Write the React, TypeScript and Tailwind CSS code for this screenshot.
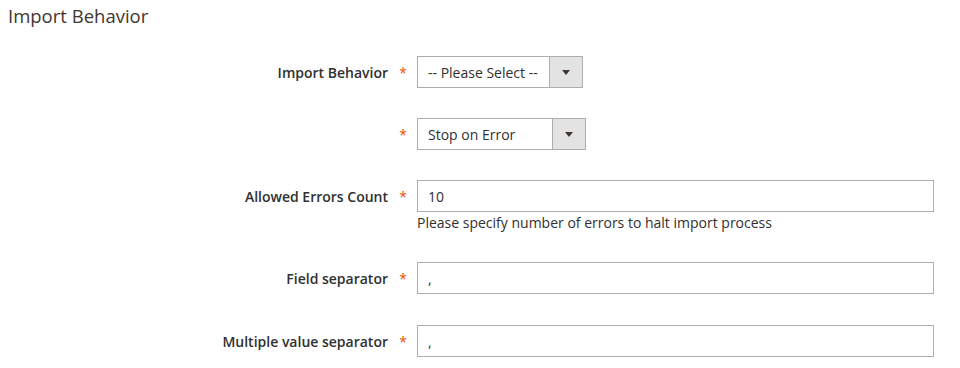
import type { ReactNode } from "react";

const font = { fontFamily: '"Open Sans", "Noto Sans", sans-serif' };

function Row({ label, children, note }: { label?: string; children: ReactNode; note?: string }) {
  return (
    <div className="flex items-start">
      <div className="flex h-[32px] w-[388px] items-center justify-end text-[14px] font-semibold text-[#303030]">
        {label}
      </div>
      <div className="flex h-[32px] w-[29px] items-center justify-center pl-[1px] text-[14px] text-[#eb5202]">*</div>
      <div className="flex flex-col">
        {children}
        {note && <div className="mt-[1px] text-[14px] leading-[20px] text-[#303030]">{note}</div>}
      </div>
    </div>
  );
}

function Select({ value, width }: { value: string; width: string }) {
  return (
    <div className={`flex h-[32px] border border-[#adadad] bg-white ${width}`}>
      <div className="flex flex-1 items-center pl-[10px] text-[14px] text-[#303030]">{value}</div>
      <div className="flex w-[33px] items-center justify-center border-l border-[#adadad] bg-[#e3e3e3]">
        <div className="h-0 w-0 border-x-[4px] border-t-[5px] border-x-transparent border-t-[#41362f]" />
      </div>
    </div>
  );
}

function Input({ value }: { value: string }) {
  return (
    <div className="flex h-[32px] w-[517px] items-center border border-[#adadad] bg-white pl-[10px] text-[14px] text-[#303030]">
      {value}
    </div>
  );
}

export default function App() {
  return (
    <div className="h-[368px] w-[960px] overflow-hidden bg-white" style={font}>
      <div className="pl-[8px] pt-[3px] text-[18.5px] leading-[26px] text-[#41362f]">Import Behavior</div>
      <div className="mt-[27px] flex flex-col">
        <Row label="Import Behavior">
          <Select value="-- Please Select --" width="w-[166px]" />
        </Row>
        <div className="h-[30px]" />
        <Row>
          <Select value="Stop on Error" width="w-[169px]" />
        </Row>
        <div className="h-[30px]" />
        <Row label="Allowed Errors Count" note="Please specify number of errors to halt import process">
          <Input value="10" />
        </Row>
        <div className="h-[29px]" />
        <Row label="Field separator">
          <Input value="," />
        </Row>
        <div className="h-[31px]" />
        <Row label="Multiple value separator">
          <Input value="," />
        </Row>
      </div>
    </div>
  );
}
